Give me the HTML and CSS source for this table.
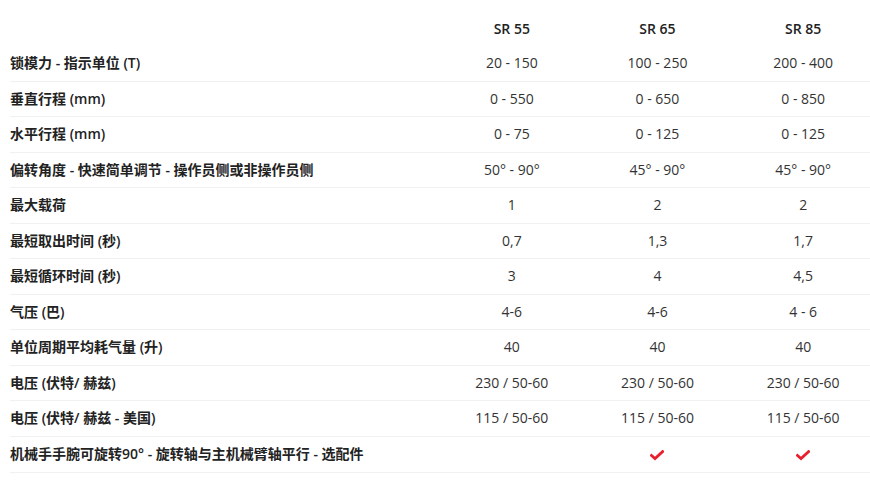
FILE: index.html
```html
<!DOCTYPE html>
<html lang="zh">
<head>
<meta charset="utf-8">
<title>规格</title>
<link rel="stylesheet" href="styles.css">
</head>
<body>
<table class="spec">
  <colgroup>
    <col class="c-label"><col class="c-val"><col class="c-val"><col class="c-val">
  </colgroup>
  <thead>
    <tr><th></th><th>SR 55</th><th>SR 65</th><th>SR 85</th></tr>
  </thead>
  <tbody>
    <tr><td class="lbl">锁模力 - 指示单位 (T)</td><td>20 - 150</td><td>100 - 250</td><td>200 - 400</td></tr>
    <tr><td class="lbl">垂直行程 (mm)</td><td>0 - 550</td><td>0 - 650</td><td>0 - 850</td></tr>
    <tr><td class="lbl">水平行程 (mm)</td><td>0 - 75</td><td>0 - 125</td><td>0 - 125</td></tr>
    <tr><td class="lbl">偏转角度 - 快速简单调节 - 操作员侧或非操作员侧</td><td>50° - 90°</td><td>45° - 90°</td><td>45° - 90°</td></tr>
    <tr><td class="lbl">最大载荷</td><td>1</td><td>2</td><td>2</td></tr>
    <tr><td class="lbl">最短取出时间 (秒)</td><td>0,7</td><td>1,3</td><td>1,7</td></tr>
    <tr><td class="lbl">最短循环时间 (秒)</td><td>3</td><td>4</td><td>4,5</td></tr>
    <tr><td class="lbl">气压 (巴)</td><td>4-6</td><td>4-6</td><td>4 - 6</td></tr>
    <tr><td class="lbl">单位周期平均耗气量 (升)</td><td>40</td><td>40</td><td>40</td></tr>
    <tr><td class="lbl">电压 (伏特/ 赫兹)</td><td>230 / 50-60</td><td>230 / 50-60</td><td>230 / 50-60</td></tr>
    <tr><td class="lbl">电压 (伏特/ 赫兹 - 美国)</td><td>115 / 50-60</td><td>115 / 50-60</td><td>115 / 50-60</td></tr>
    <tr><td class="lbl">机械手手腕可旋转90° - 旋转轴与主机械臂轴平行 - 选配件</td><td></td>
      <td><svg class="check" viewBox="0 0 14 11" width="14" height="11"><path d="M1.5 5.5 L5 8.6 L12.6 1.6" fill="none" stroke="#e8202e" stroke-width="2.8" stroke-linecap="square"/></svg></td>
      <td><svg class="check" viewBox="0 0 14 11" width="14" height="11"><path d="M1.5 5.5 L5 8.6 L12.6 1.6" fill="none" stroke="#e8202e" stroke-width="2.8" stroke-linecap="square"/></svg></td>
    </tr>
  </tbody>
</table>
</body>
</html>
```
FILE: styles.css
```css
html, body {
  margin: 0;
  padding: 0;
  overflow: hidden;
  background: #fff;
}
body {
  padding: 11px 0 0 10px;
  font-family: "Open Sans", "Noto Sans CJK SC", sans-serif;
  font-size: 14px;
  color: #333;
}
.spec {
  border-collapse: collapse;
  table-layout: fixed;
  width: 866px;
}
.c-label { width: 429px; }
.c-val { width: 145.67px; }
.spec th {
  font-weight: 600;
  color: #222;
  text-align: center;
  padding: 7px 0;
  line-height: 21px;
}
.spec td {
  text-align: center;
  padding: 7px 0;
  line-height: 20.55px;
  border-bottom: 1px solid #f1f1f1;
  white-space: nowrap;
}
.spec td.lbl {
  text-align: left;
  font-weight: 600;
  color: #222;
}
.check {
  display: inline-block;
  vertical-align: middle;
}
```
